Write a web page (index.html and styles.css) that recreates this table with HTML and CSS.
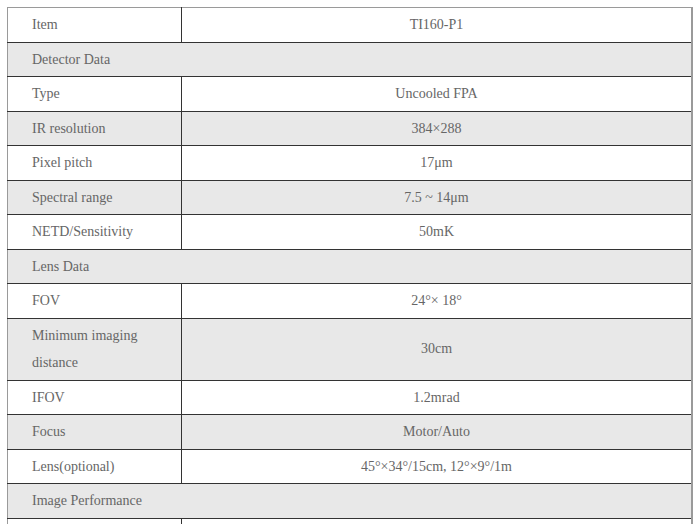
FILE: index.html
```html
<!DOCTYPE html>
<html>
<head>
<meta charset="utf-8">
<link rel="stylesheet" href="styles.css">
</head>
<body>
<table class="spec">
  <colgroup><col class="c1"><col class="c2"></colgroup>
  <tbody>
    <tr><td>Item</td><td class="val">TI160-P1</td></tr>
    <tr><td colspan="2">Detector Data</td></tr>
    <tr><td>Type</td><td class="val">Uncooled FPA</td></tr>
    <tr><td>IR resolution</td><td class="val">384×288</td></tr>
    <tr><td>Pixel pitch</td><td class="val">17μm</td></tr>
    <tr><td>Spectral range</td><td class="val">7.5 ~ 14μm</td></tr>
    <tr><td>NETD/Sensitivity</td><td class="val">50mK</td></tr>
    <tr><td colspan="2">Lens Data</td></tr>
    <tr><td>FOV</td><td class="val">24°× 18°</td></tr>
    <tr><td>Minimum imaging distance</td><td class="val">30cm</td></tr>
    <tr><td>IFOV</td><td class="val">1.2mrad</td></tr>
    <tr><td>Focus</td><td class="val">Motor/Auto</td></tr>
    <tr><td>Lens(optional)</td><td class="val">45°×34°/15cm, 12°×9°/1m</td></tr>
    <tr><td colspan="2">Image Performance</td></tr>
    <tr class="blank"><td></td><td class="val"></td></tr>
  </tbody>
</table>
</body>
</html>
```

FILE: styles.css
```css
html, body {
  margin: 0;
  padding: 0;
  background: #ffffff;
}
body {
  padding: 7px;
  font-family: "Liberation Serif", "Times New Roman", serif;
  font-size: 14px;
  color: #666666;
}
.spec {
  border-collapse: collapse;
  table-layout: fixed;
  width: 686px;
}
.c1 { width: 174px; }
.spec td {
  border: 1px solid #333333;
  padding: 3px 24px;
  line-height: 27.5px;
  vertical-align: middle;
}
.spec td:first-child { border-left: 1px solid #9a9a9a; }
.spec td:last-child { border-right: 2px solid #9a9a9a; }
.spec tr:first-child td { border-top: 1px solid #9a9a9a; }
.spec tr:nth-child(even) { background: #e8e8e8; }
.spec td.val { text-align: center; }
.spec tr.blank td { height: 27.5px; }
```
